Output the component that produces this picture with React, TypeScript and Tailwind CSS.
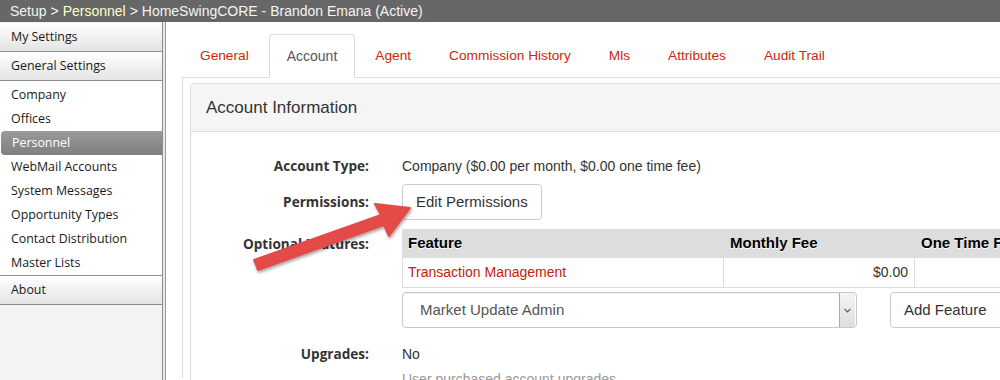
import React from 'react';

const sideItems = [
  'Company',
  'Offices',
  'Personnel',
  'WebMail Accounts',
  'System Messages',
  'Opportunity Types',
  'Contact Distribution',
  'Master Lists',
];

const tabs = ['General', 'Account', 'Agent', 'Commission History', 'Mls', 'Attributes', 'Audit Trail'];

function SideHeader({ label }: { label: string }) {
  return (
    <div className="h-[29px] flex items-center pl-[11px] pt-[1px] bg-gradient-to-b from-white to-[#e4e4e4] border-b border-[#8c8c8c] text-[12.4px] text-[#1a1a1a]">
      {label}
    </div>
  );
}

function Sidebar() {
  return (
    <div className="w-[163px] shrink-0 pt-[1px] bg-[#f3f3f3] border-r border-[#8c8c8c] font-['Open_Sans',sans-serif]">
      <SideHeader label="My Settings" />
      <SideHeader label="General Settings" />
      <div className="bg-white pt-[2px] border-b border-[#8c8c8c]">
        {sideItems.map(item =>
          item === 'Personnel' ? (
            <div
              key={item}
              className="h-[24px] flex items-center pl-[11px] ml-[1px] rounded-l-[4px] bg-gradient-to-b from-[#9a9a9a] to-[#7f7f7f] text-white text-[12.4px]"
            >
              {item}
            </div>
          ) : (
            <div key={item} className="h-[24px] flex items-center pl-[11px] text-[12.4px] text-[#1a1a1a]">
              {item}
            </div>
          )
        )}
      </div>
      <SideHeader label="About" />
    </div>
  );
}

function Label({ children }: { children: React.ReactNode }) {
  return (
    <div className="w-[178px] shrink-0 text-right font-['Open_Sans',sans-serif] font-bold text-[13.6px] text-[#333]">
      {children}
    </div>
  );
}

export default function App() {
  return (
    <div className="relative w-[1000px] h-[380px] overflow-hidden bg-white font-['Liberation_Sans',Arial,sans-serif]">
      <div className="h-[22px] bg-[#676767] flex items-center pl-[10px] text-[14px] text-[#f4f4f4]">
        <span>Setup &gt; </span>
        <span className="text-[#ffffc8] mx-[4px]">Personnel</span>
        <span>&gt; HomeSwingCORE - Brandon Emana (Active)</span>
      </div>

      <div className="flex h-[358px]">
        <Sidebar />
        <div className="w-[2px] shrink-0 bg-[#e9e9e9]" />
        <div className="flex-1 min-w-0 border-l border-[#9a9a9a] pl-[16px] pt-[12px] overflow-hidden">
          {/* tabs */}
          <div className="flex border-b border-[#ddd] w-[900px]">
            {tabs.map(t =>
              t === 'Account' ? (
                <div
                  key={t}
                  className="mr-[2px] px-[17px] pt-[11px] pb-[10px] leading-[20px] text-[14px] text-[#555] bg-white border border-[#ddd] border-b-white rounded-t-[4px] mb-[-1px]"
                >
                  {t}
                </div>
              ) : (
                <div
                  key={t}
                  className="mr-[2px] px-[17px] pt-[11px] pb-[10px] leading-[20px] text-[13.7px] text-[#d2230f] border border-transparent"
                >
                  {t}
                </div>
              )
            )}
          </div>

          <div className="border-l border-[#ddd] pl-[7px] pt-[5px] h-[300px]">
            <div className="border border-[#ddd] rounded-[4px] w-[900px] h-[320px]">
              <div className="h-[48px] bg-[#f5f5f5] border-b border-[#ddd] rounded-t-[4px] flex items-center pl-[15px] text-[17px] text-[#333]">
                Account Information
              </div>

              <div className="pt-[24px] text-[14px] text-[#333]">
                <div className="flex items-center h-[20px]">
                  <Label>Account Type:</Label>
                  <div className="ml-[33px]">Company ($0.00 per month, $0.00 one time fee)</div>
                </div>

                <div className="flex items-center mt-[8px]">
                  <Label>Permissions:</Label>
                  <div className="ml-[33px]">
                    <div className="h-[36px] px-[13px] flex items-center border border-[#ccc] rounded-[4px] text-[15px] text-[#333] bg-white">
                      Edit Permissions
                    </div>
                  </div>
                </div>

                <div className="flex mt-[9px]">
                  <div className="pt-[5px]">
                    <Label>Optional Features:</Label>
                  </div>
                  <div className="ml-[33px] flex-1">
                    <div className="w-[700px] border-b border-[#ddd]">
                      <div className="flex h-[29px] bg-[#dddddd] items-center font-bold text-[15px] text-black [text-shadow:0_1px_0_#fff]">
                        <div className="w-[321px] px-[6px]">Feature</div>
                        <div className="w-[191px] px-[7px]">Monthly Fee</div>
                        <div className="flex-1 px-[7px]">One Time Fee</div>
                      </div>
                      <div className="flex h-[29px] items-center text-[14px] border-l border-[#ddd]">
                        <div className="w-[320px] h-full flex items-center px-[5px] text-[#c8200e]">Transaction Management</div>
                        <div className="w-[191px] h-full flex items-center justify-end px-[6px] border-l border-[#ddd] text-[#333]">$0.00</div>
                        <div className="flex-1 h-full border-l border-[#ddd]" />
                      </div>
                    </div>

                    <div className="flex mt-[4px]">
                      <div className="w-[455px] h-[36px] border border-[#c8c8c8] rounded-[4px] flex items-center pl-[17px] pr-[1px] text-[15px] text-[#555] shadow-[inset_0_1px_1px_rgba(0,0,0,0.06)]">
                        <span className="flex-1">Market Update Admin</span>
                        <div className="w-[16px] h-[34px] bg-gradient-to-b from-[#f4f4f4] to-[#dedede] border-l border-[#aaa] flex items-center justify-center rounded-r-[3px]">
                          <svg width="7" height="5" viewBox="0 0 7 5">
                            <path d="M0.5 0.8 L3.5 4 L6.5 0.8" fill="none" stroke="#555" strokeWidth="1.1" />
                          </svg>
                        </div>
                      </div>
                      <div className="ml-[33px] h-[36px] px-[13px] flex items-center border border-[#ccc] rounded-[4px] text-[15px] text-[#333] bg-white w-[140px]">
                        Add Feature
                      </div>
                    </div>
                  </div>
                </div>

                <div className="flex items-center h-[20px] mt-[16px]">
                  <Label>Upgrades:</Label>
                  <div className="ml-[33px]">No</div>
                </div>
                <div className="flex mt-[5px]">
                  <div className="w-[178px]" />
                  <div className="ml-[33px] text-[#999]">User purchased account upgrades</div>
                </div>
              </div>
            </div>
          </div>
        </div>
      </div>

      {/* annotation arrow */}
      <svg className="absolute top-0 left-0 pointer-events-none" width="1000" height="380" viewBox="0 0 1000 380">
        <defs>
          <filter id="sh" x="-20%" y="-20%" width="140%" height="140%">
            <feDropShadow dx="1" dy="2" stdDeviation="1.5" floodColor="#000" floodOpacity="0.35" />
          </filter>
        </defs>
        <polygon
          points="254,260 381,215 375,204 410,208 389,236 384,225 258,270"
          fill="#e34b48"
          stroke="#e34b48"
          strokeWidth="2"
          strokeLinejoin="round"
          filter="url(#sh)"
        />
      </svg>
    </div>
  );
}
